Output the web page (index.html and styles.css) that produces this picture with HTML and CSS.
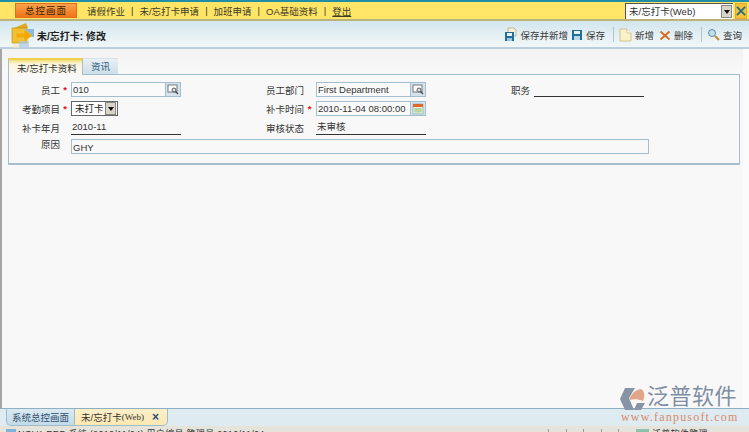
FILE: index.html
```html
<!DOCTYPE html>
<html lang="zh-CN">
<head>
    <meta charset="UTF-8">
    <title>未/忘打卡: 修改</title>
    <link rel="stylesheet" href="styles.css">
</head>
<body>
<div class="topstrip"></div>
<div class="menubar">
    <div class="homebtn">总控画面</div>
    <nav class="menu">
        <span>请假作业</span><i>|</i>
        <span>未/忘打卡申请</span><i>|</i>
        <span>加班申请</span><i>|</i>
        <span>OA基础资料</span><i>|</i>
        <span class="logout">登出</span>
    </nav>
    <div class="winselect">
        <div class="selectbox">未/忘打卡(Web)<b class="arrow"></b></div>
        <div class="closebtn">
            <svg width="10" height="10" viewBox="0 0 11 11"><path d="M1 1l9 9M10 1l-9 9" stroke="#1d6f8c" stroke-width="2"/></svg>
        </div>
    </div>
</div>

<div class="titlebar">
    <svg class="pageicon" width="25" height="28" viewBox="0 0 25 28">
        <path d="M3 7l12-5 2 5z" fill="#e0a820"/>
        <rect x="1" y="7" width="15" height="15" fill="#f0c030" stroke="#b98a10" stroke-width=".6"/>
        <rect x="13" y="8" width="10" height="8" fill="#8fb6dc"/>
        <rect x="8" y="20" width="10" height="6" fill="#a8c8ea" opacity=".7"/>
        <path d="M5 12h8V8l8 6.500-8 6.500v-4H5z" fill="#f5a800" stroke="#e8d060" stroke-width=".5"/>
        <rect x="2" y="23" width="6" height="4" fill="#f3e6b8" opacity=".6"/>
    </svg>
    <div class="pagetitle">未/忘打卡: 修改</div>
    <div class="tools">
        <span class="tool savenew">
            <svg width="13" height="15" viewBox="0 0 13 15"><path d="M4 1h6l2 2v6H4z" fill="#f6efd8" stroke="#b0a080" stroke-width=".7"/><rect x="1" y="5" width="9" height="9" fill="#1f6f9a"/><rect x="3" y="6" width="5" height="3" fill="#e8f2f8"/><rect x="3" y="11" width="5" height="3" fill="#9cc4dc"/></svg>
            保存并新增
        </span>
        <span class="tool">
            <svg width="12" height="12" viewBox="0 0 12 12"><rect x="1" y="1" width="10" height="10" fill="#1f6f9a"/><rect x="3" y="2" width="6" height="3" fill="#e8f2f8"/><rect x="3" y="7" width="6" height="4" fill="#bcd8e8"/></svg>
            保存
        </span>
        <span class="toolsep"></span>
        <span class="tool">
            <svg width="13" height="14" viewBox="0 0 13 14"><path d="M1 1h7l4 4v8H1z" fill="#fbf3c8" stroke="#c8b878" stroke-width=".8"/><path d="M8 1v4h4" fill="#fff" stroke="#c8b878" stroke-width=".7"/></svg>
            新增
        </span>
        <span class="tool">
            <svg width="12" height="12" viewBox="0 0 12 12"><path d="M1.500 2.500l9 8M10.500 2.500l-9 8" stroke="#d9661a" stroke-width="1.700"/></svg>
            删除
        </span>
        <span class="toolsep"></span>
        <span class="tool">
            <svg width="13" height="13" viewBox="0 0 13 13"><circle cx="5" cy="5" r="3.500" fill="#bfe0ee" stroke="#5a90a8"/><path d="M8 8l4 4" stroke="#c08a30" stroke-width="2"/></svg>
            查询
        </span>
    </div>
</div>

<div class="content">
    <div class="tabs">
        <div class="tab active">未/忘打卡资料</div>
        <div class="tab">资讯</div>
    </div>
    <div class="panel">
        <div class="formgrid">
            <label>员工</label><em>*</em>
            <div class="lookup"><span class="val">010</span>
                <b class="lookbtn"><svg width="12" height="11" viewBox="0 0 12 11"><rect x="1" y="1" width="9" height="7" fill="#fff" stroke="#777"/><circle cx="7" cy="6" r="2" fill="#dce8ee" stroke="#555"/><path d="M8.500 7.500l2.500 2.500" stroke="#444" stroke-width="1.200"/></svg></b>
            </div>
            <label class="col2">员工部门</label><em></em>
            <div class="lookup"><span class="val">First Department</span>
                <b class="lookbtn"><svg width="12" height="11" viewBox="0 0 12 11"><rect x="1" y="1" width="9" height="7" fill="#fff" stroke="#777"/><circle cx="7" cy="6" r="2" fill="#dce8ee" stroke="#555"/><path d="M8.500 7.500l2.500 2.500" stroke="#444" stroke-width="1.200"/></svg></b>
            </div>
            <label class="col3">职务</label>
            <div class="readonly"></div>

            <label>考勤项目</label><em>*</em>
            <div class="combo">未打卡<b class="arrow"></b></div>
            <label class="col2">补卡时间</label><em>*</em>
            <div class="lookup"><span class="val">2010-11-04 08:00:00</span>
                <b class="lookbtn"><svg width="12" height="12" viewBox="0 0 12 12"><rect x="1" y="1" width="10" height="10" fill="#e4f0d8" stroke="#88a8b8" stroke-width=".7"/><rect x="1" y="1" width="10" height="3" fill="#e0662a"/><path d="M2 6h8M2 8h8M4 5v5M6 5v5M8 5v5" stroke="#8cbf70" stroke-width=".6"/></svg></b>
            </div>
            <span class="filler"></span>

            <label>补卡年月</label><em></em>
            <div class="readonly">2010-11</div>
            <label class="col2">审核状态</label><em></em>
            <div class="readonly">未审核</div>
            <span class="filler"></span>

            <label class="reasonlabel">原因</label><em></em>
            <div class="reason">GHY</div>
        </div>
    </div>
</div>

<div class="bottomtabs">
    <div class="btab">系统总控画面</div>
    <div class="btab current">未/忘打卡<span class="web">(Web)</span><b class="x">×</b></div>
</div>

<div class="statusbar">
    <svg class="staticon" width="10" height="10" viewBox="0 0 10 10"><rect width="10" height="10" fill="#7fb2d8"/></svg>
    <span class="stattext">NOVA ERP 系统 (2010/11/04) 用户编号:管理员 2010/11/04</span>
    <div class="cells"><s></s><s></s><s></s><s></s><s></s></div>
    <svg class="staticon2" width="13" height="10" viewBox="0 0 13 10"><rect width="13" height="10" fill="#8fc0a8"/></svg>
    <span class="stattext right">泛普软件管理</span>
</div>

<div class="brand">
    <svg class="brandmark" width="26" height="23" viewBox="0 0 26 23">
        <path d="M5 0h10L9 10l5 12H5L0 11z" fill="#8794a6"/>
        <path d="M9 12c2-6 6-10 12-11 4 2 4 8 2 12-5-2-9-2-14-1z" fill="#e2a587"/>
        <path d="M14 22l3-7h8l-4 7z" fill="#8794a6"/>
    </svg>
    <div class="brandname">泛普软件</div>
    <div class="brandurl">www.fanpusoft.com</div>
</div>
</body>
</html>
```

FILE: styles.css
```css
html, body {
    margin: 0;
    height: 100%;
}

body {
    width: 749px;
    height: 432px;
    overflow: hidden;
    position: relative;
    display: flex;
    flex-direction: column;
    font-family: "Liberation Sans", "Noto Sans CJK SC", sans-serif;
    font-size: 9.500px;
    color: #222;
    background: #f7f7f7;
}

.topstrip {
    height: 2px;
    background: #1f8ea6;
}

.menubar {
    height: 17px;
    display: flex;
    align-items: center;
    padding-left: 15px;
    background: #ffe566;
    border-bottom: 2px solid #bdb27a;
}

.homebtn {
    width: 60px;
    height: 13px;
    line-height: 13px;
    text-align: center;
    letter-spacing: 1px;
    background: linear-gradient(#f9a24c, #f0741a);
    border: 1px solid #e2701e;
    color: #3a2508;
}

.menu {
    display: flex;
    align-items: center;
    margin-left: 10px;
    color: #3c3c28;
}

.menu i {
    font-style: normal;
    margin: 0 6px;
}

.logout {
    text-decoration: underline;
}

.winselect {
    margin-left: auto;
    display: flex;
    align-items: center;
    gap: 2px;
    padding-right: 2px;
}

.selectbox {
    width: 104px;
    height: 15px;
    line-height: 15px;
    padding-left: 3px;
    background: #fff;
    border-top: 1px solid #555;
    border-left: 1px solid #555;
    position: relative;
    color: #333;
}

.arrow {
    position: absolute;
    right: 1px;
    top: 1px;
    width: 11px;
    height: 13px;
    background: #d8d4c8;
    border: 1px solid #888;
    box-sizing: border-box;
}

.arrow::after {
    content: "";
    position: absolute;
    left: 2px;
    top: 4px;
    border: 3px solid transparent;
    border-top: 4px solid #111;
}

.closebtn {
    width: 10px;
    height: 14px;
    display: flex;
    align-items: center;
    justify-content: center;
    background: #f5c33a;
    border: 1px solid #eba42c;
}

.titlebar {
    height: 25px;
    display: flex;
    align-items: center;
    padding-left: 11px;
    padding-top: 1px;
    background: linear-gradient(#d2e6ee, #e6f1f4 60%, #f2f7f7);
    border-bottom: 2px solid #b9d0dc;
}

.pageicon {
    flex: none;
    margin: 0 1px 0 0;
}

.pagetitle {
    font-size: 10px;
    font-weight: bold;
    color: #222;
    padding-top: 1px;
}

.tools {
    margin-left: auto;
    display: flex;
    align-items: center;
    gap: 5px;
    padding-right: 7px;
    color: #3a3a3a;
}

.tool {
    display: flex;
    align-items: center;
    gap: 3px;
}

.tool.savenew {
    margin-right: -2px;
}

.toolsep {
    width: 1px;
    height: 15px;
    margin-left: 3px;
    background: #b4c4cc;
}

.content {
    flex: 1;
    padding: 8px 3px 0 6px;
    border-left: 2px solid #a6a6a6;
    border-right: 6px solid #fbfbfb;
    background: linear-gradient(#f2f2f2, #f8f8f8 20px);
    box-sizing: border-box;
}

.tabs {
    display: flex;
    height: 17px;
    align-items: flex-end;
}

.tab {
    height: 15px;
    line-height: 15px;
    padding: 0 8px;
    white-space: nowrap;
    background: linear-gradient(#e8f0f4, #cfdfe8);
    color: #2f5f7f;
    border-top: 1px solid #d8e4ea;
}

.tab.active {
    height: 17px;
    line-height: 17px;
    width: 75px;
    padding: 0 0 0 8px;
    color: #333;
    background: linear-gradient(#f5de7c 0, #fbf6dc 4px, #f9f9f5);
    border: 1px solid #a8c0cc;
    border-top: 2px solid #f0cf4c;
    border-bottom: none;
    box-sizing: border-box;
    margin-bottom: -1px;
    position: relative;
}

.panel {
    height: 91px;
    border: 1px solid #a3bfcf;
    border-bottom-width: 2px;
    box-sizing: border-box;
    background: #f8f8f8;
    padding-top: 5px;
}

.formgrid {
    display: grid;
    grid-template-columns: 51px 11px 110px 123px 12px 110px 108px 110px;
    grid-auto-rows: 19px;
    align-items: center;
}

.formgrid label {
    text-align: right;
    color: #333;
    white-space: nowrap;
}

.formgrid em {
    color: #e01010;
    font-style: normal;
    font-weight: bold;
    text-align: center;
    padding-right: 1px;
}

.formgrid .col3 {
    padding-right: 4px;
}

.filler {
    grid-column: span 2;
}

.lookup {
    height: 15px;
    display: flex;
    justify-content: space-between;
    border: 1px solid #a3bfcf;
    box-sizing: border-box;
    background: #fafafa;
}

.val {
    padding-left: 1px;
    line-height: 13px;
    white-space: nowrap;
    color: #333;
}

.lookbtn {
    width: 14px;
    flex: none;
    border-left: 1px solid #a3bfcf;
    background: #d5e3ec;
    display: flex;
    align-items: center;
    justify-content: center;
}

.combo {
    width: 47px;
    height: 15px;
    line-height: 14px;
    padding-left: 3px;
    box-sizing: border-box;
    position: relative;
    background: #fff;
    border: 1px solid #666;
}

.combo .arrow {
    top: 0;
    right: 1px;
}

.readonly {
    height: 15px;
    line-height: 13px;
    border-bottom: 1px solid #333;
    box-sizing: border-box;
    color: #333;
    padding-left: 1px;
}

.reason {
    grid-column: 3 / 9;
    width: 578px;
    height: 15px;
    line-height: 15px;
    padding-left: 1px;
    border: 1px solid #a3bfcf;
    box-sizing: border-box;
    color: #333;
}

.reasonlabel {
    padding-bottom: 5px;
}

.bottomtabs {
    height: 17px;
    display: flex;
    align-items: flex-end;
    padding-left: 6px;
    background: #deebf1;
    border-top: 1px solid #8fb0c4;
}

.btab {
    width: 69px;
    height: 17px;
    line-height: 17px;
    padding: 0 0 0 5px;
    box-sizing: border-box;
    white-space: nowrap;
    color: #2f4f6f;
    background: linear-gradient(#dbe9f1, #c3dbe8);
    border: 1px solid #9fbccc;
    border-top: none;
    border-radius: 0 0 0 5px;
}

.btab.current {
    width: 93px;
    color: #333;
    padding: 0 0 0 6px;
    background: linear-gradient(#fcefc8, #fde8b2);
    border-left: none;
    border-radius: 0 0 5px 0;
    display: flex;
    align-items: center;
}

.web {
    font-family: "Liberation Serif", serif;
    font-size: 9px;
}

.x {
    margin-left: 8px;
    color: #24527a;
    font-size: 12px;
}

.statusbar {
    height: 6px;
    display: flex;
    overflow: hidden;
    background: #e6e3da;
    padding: 3px 0 0 6px;
    box-sizing: border-box;
    font-size: 9px;
    line-height: 11px;
    color: #333;
}

.staticon {
    flex: none;
    margin-right: 2px;
}

.stattext {
    white-space: nowrap;
    letter-spacing: .3px;
}

.stattext.right {
    margin-left: 2px;
}

.cells {
    display: flex;
    margin-left: auto;
}

.cells s {
    width: 17.600px;
    height: 6px;
    border-left: 1px solid #999;
    box-sizing: border-box;
}

.staticon2 {
    flex: none;
    margin-right: 1px;
}

.statusbar .right {
    width: 97px;
}

/* logo sits on top of the page and the tab bar */
.brand {
    position: absolute;
    left: 619px;
    top: 386px;
    width: 122px;
    height: 40px;
}

.brandmark {
    position: absolute;
    left: 1px;
    top: 2px;
}

.brandname {
    position: absolute;
    left: 28px;
    top: -3px;
    font-size: 22px;
    line-height: 28px;
    letter-spacing: .5px;
    white-space: nowrap;
    color: #7f8ea3;
}

.brandurl {
    position: absolute;
    left: 2px;
    top: 24px;
    font-family: "Liberation Serif", serif;
    font-size: 12px;
    line-height: 14px;
    letter-spacing: 1.200px;
    white-space: nowrap;
    color: #d98a6a;
}
```
